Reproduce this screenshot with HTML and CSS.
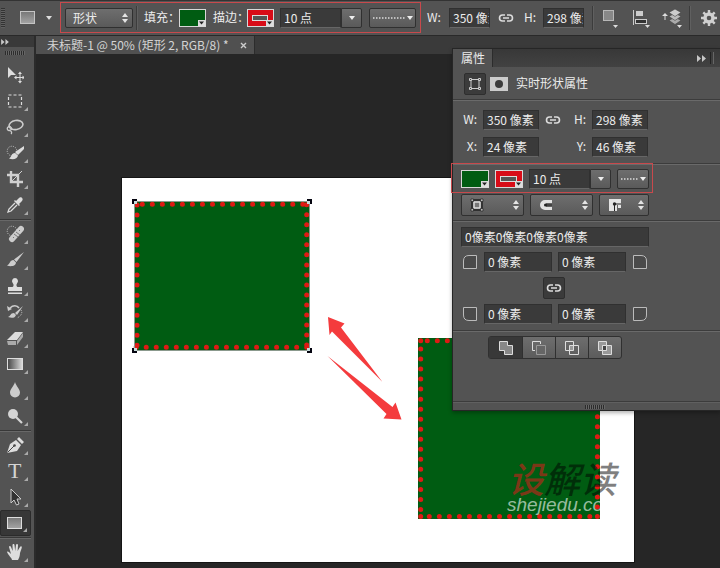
FILE: index.html
```html
<!DOCTYPE html>
<html lang="zh-CN">
<head>
<meta charset="utf-8">
<title>未标题-1</title>
<link rel="stylesheet" href="styles.css">
</head>
<body>
<svg class="defs" aria-hidden="true">
  <defs>
    <linearGradient id="metal" x1="0" y1="0" x2="0" y2="1"><stop offset="0" stop-color="#777"/><stop offset="1" stop-color="#a4a4a4"/></linearGradient>
    <linearGradient id="ramp" x1="0" y1="0" x2="1" y2="0"><stop offset="0" stop-color="#444"/><stop offset="1" stop-color="#ddd"/></linearGradient>
    <symbol id="link" viewBox="0 0 16 10"><path d="M7 2H4.500a3 3 0 0 0 0 6H7M9 2h2.500a3 3 0 0 1 0 6H9M5 5h6" fill="none" stroke="#dcdcdc" stroke-width="1.600"/></symbol>
    <symbol id="swatch-menu" viewBox="0 0 7 6"><path d="M0 0h7v6H0z" fill="#ddd"/><path d="M1 1.500h5L3.500 4.500z" fill="#222"/></symbol>
    <symbol id="updown" viewBox="0 0 6 10"><path d="M3 0l3 4H0zM3 10L0 6h6z" fill="#e4e4e4"/></symbol>
    <symbol id="forward" viewBox="0 0 9 7"><path d="M0 0l4 3.500L0 7zM5 0l4 3.500L5 7z" fill="#c8c8c8"/></symbol>
  </defs>
</svg>
<div class="app">
  <header class="options">
    <span class="grip-v"></span>
    <button class="plain preset" aria-label="矩形工具预设"><svg width="34" height="16"><rect x=".5" y="1.500" width="14" height="12" fill="url(#metal)" stroke="#c4c4c4"/><path d="M26 6h6l-3 4z" fill="#ddd"/></svg></button>
    <span class="pick"><select class="mode" aria-label="工具模式"><option>形状</option></select><svg class="pick-arrow" width="6" height="10"><use href="#updown"/></svg></span>
    <span class="divider"></span>
    <label class="fill-label" for="fill">填充：</label>
    <button id="fill" class="swatch green"><svg class="corner" width="7" height="6"><use href="#swatch-menu"/></svg></button>
    <label class="stroke-label" for="stroke">描边：</label>
    <button id="stroke" class="swatch red"><span class="hollow"></span><svg class="corner" width="7" height="6"><use href="#swatch-menu"/></svg></button>
    <span class="combo"><input aria-label="描边宽度" value="10 点"><button class="raised" aria-label="描边宽度选项"><svg width="6" height="4"><path d="M0 0h6L3 4z" fill="#eee"/></svg></button></span>
    <button class="raised dots" aria-label="描边类型"><svg width="42" height="6"><path d="M1 3h32" stroke="#ddd" stroke-width="1.500" stroke-dasharray="1.500 1.500"/><path d="M35 1h6l-3 4z" fill="#eee"/></svg></button>
    <label class="w-label" for="ow">W:</label><input id="ow" class="size" value="350 像素">
    <button class="plain chain" aria-label="链接宽高"><svg width="16" height="10"><use href="#link"/></svg></button>
    <label class="h-label" for="oh">H:</label><input id="oh" class="size" value="298 像素">
    <span class="divider wide"></span>
    <div class="ops">
      <button class="plain" aria-label="路径操作"><svg width="18" height="20"><rect x="1.500" y="2.500" width="10" height="10" fill="#888" stroke="#b8b8b8"/><path d="M11 17h5l-2.500 3z" fill="#ddd"/></svg></button>
      <button class="plain" aria-label="对齐"><svg width="18" height="20"><path d="M1.500 2v15" stroke="#ccc"/><rect x="4" y="3" width="7" height="5" fill="#ccc"/><rect x="3.500" y="11.500" width="11" height="4" fill="#333" stroke="#ccc"/><path d="M13 17h5l-2.500 3z" fill="#ddd"/></svg></button>
      <button class="plain" aria-label="排列"><svg width="20" height="20"><path d="M13 9l6 3.500-6 4-6-4z" fill="#aaa" stroke="#444" stroke-width=".6"/><path d="M13 5l6 3.500-6 4-6-4z" fill="#bbb" stroke="#444" stroke-width=".6"/><path d="M13 1l6 3.500-6 4-6-4z" fill="#ccc" stroke="#444" stroke-width=".6"/><path d="M3 12V7" stroke="#ddd"/><path d="M0 8l3-3 3 3zM15 17h5l-2.500 3z" fill="#ddd"/></svg></button>
    </div>
    <span class="divider last"></span>
    <button class="plain gear" aria-label="设置"><svg width="16" height="16"><circle cx="8" cy="8" r="4" fill="none" stroke="#d0d0d0" stroke-width="3.400"/><path d="M8 0v3M8 13v3M0 8h3M13 8h3M2.300 2.300l2 2M11.700 11.700l2 2M13.700 2.300l-2 2M4.300 11.700l-2 2" stroke="#d0d0d0" stroke-width="2.400"/></svg></button>
    <span class="mark mark-top"></span>
  </header>

  <div class="body">
    <aside class="toolbar">
      <div class="tool-head"><svg width="8" height="6"><use href="#forward"/></svg></div>
      <div class="tool-grip"><span class="grip-h"></span></div>
      <nav class="tools" aria-label="工具">
        <button aria-label="移动"><svg viewBox="0 0 18 18"><path d="M2 1v11l3-3h5z" fill="#ddd"/><path d="M14 7v9M9.500 11.500h9" stroke="#ddd"/><path d="M14 5.500l2 2.500h-4zM14 17.500l2-2.500h-4zM8 11.500l2.500-2v4zM19 11.500l-2.500-2v4z" fill="#ddd"/></svg></button>
        <button class="more" aria-label="选框"><svg viewBox="0 0 18 18"><rect x="2.500" y="3" width="13" height="12" fill="none" stroke="#ddd" stroke-width="1.200" stroke-dasharray="3 2"/></svg></button>
        <button class="more" aria-label="套索"><svg viewBox="0 0 18 18"><ellipse cx="10" cy="7" rx="7" ry="4.500" fill="none" stroke="#ccc" stroke-width="1.600" transform="rotate(-10 10 7)"/><path d="M5 9.500a2 2 0 1 0-1 3c2-1 2-2 1-3M3 12c3 1 3 3 2 4" fill="none" stroke="#ccc" stroke-width="1.300"/></svg></button>
        <button class="more" aria-label="快速选择"><svg viewBox="0 0 18 18"><circle cx="6" cy="7" r="4.800" fill="none" stroke="#ccc" stroke-dasharray="1 1.300"/><path d="M18 2l-9 6 3 3 6-6zM9 9c-4 0-3 4-6 5.500 4 1.500 8.500.5 9-3z" fill="#ddd"/></svg></button>
        <button class="more" aria-label="裁剪"><svg viewBox="0 0 18 18"><path d="M5 1v11h12M1 5h11v12" fill="none" stroke="#d0d0d0" stroke-width="2.400"/><path d="M16 1L6 11" stroke="#d0d0d0"/></svg></button>
        <button class="more" aria-label="吸管"><svg viewBox="0 0 18 18"><path d="M9 7L3 13l-1 3 3-1 6-6" fill="none" stroke="#ddd" stroke-width="1.300"/><path d="M8 5l5 5 1-1-1-1 3-3c2-2-1-5-3-3l-3 3-1-1z" fill="#ddd"/></svg></button>
        <hr>
        <button class="more" aria-label="修复画笔"><svg viewBox="0 0 18 18"><circle cx="6" cy="6" r="4.800" fill="none" stroke="#ccc" stroke-dasharray="1 1.300"/><path d="M6 14L15 4" stroke="#ccc" stroke-width="6" stroke-linecap="round"/><path d="M8 9l4 3M10 7l4 3M7 12l1 1M13 5l1 1" stroke="#777"/></svg></button>
        <button class="more" aria-label="画笔"><svg viewBox="0 0 18 18"><path d="M18 1L8 8.500l2.500 2.500zM7.500 9c-4 0-3 4-6.500 5.500 4 1.500 9 .5 9-3z" fill="#ccc"/></svg></button>
        <button class="more" aria-label="仿制图章"><svg viewBox="0 0 18 18"><path d="M9 1a3.200 3.200 0 0 0-2 5.500c1 1 .5 3.500-.5 3.500H2v4h14v-4h-4.500c-1 0-1.500-2.500-.5-3.500A3.200 3.200 0 0 0 9 1zM2 15.500h14V17H2z" fill="#ddd"/></svg></button>
        <button class="more" aria-label="历史记录画笔"><svg viewBox="0 0 18 18"><path d="M4 5c3-3 7-3 9 0" fill="none" stroke="#ccc" stroke-width="1.600"/><path d="M1 3l1 5 4-2zM17 3l-8 7 2 2zM8 10c-4 0-3 3-6 4 4 1.500 7 1 8-2z" fill="#ccc"/><path d="M15 7c2 3 0 6-4 8" fill="none" stroke="#bbb" stroke-dasharray="1 1"/></svg></button>
        <button class="more" aria-label="橡皮擦"><svg viewBox="0 0 18 18"><path d="M1 11l8-8h8l-6 8z" fill="#ddd"/><path d="M1 12h9v4H2zM11 12l6-8v4l-6 8z" fill="#aaa"/></svg></button>
        <button class="more" aria-label="渐变"><svg viewBox="0 0 18 18"><rect x="1.500" y="3.500" width="15" height="11" fill="url(#ramp)" stroke="#ddd"/></svg></button>
        <button class="more" aria-label="模糊"><svg viewBox="0 0 18 18"><path d="M9 1c1 4 5 7 5 10.500a5 5 0 0 1-10 0C4 8 8 5 9 1z" fill="#ccc"/></svg></button>
        <button class="more" aria-label="减淡"><svg viewBox="0 0 18 18"><circle cx="7" cy="7" r="5" fill="#d4d4d4"/><path d="M10 10l6 6" stroke="#d4d4d4" stroke-width="2.200"/></svg></button>
        <hr>
        <button class="more" aria-label="钢笔"><svg viewBox="0 0 18 18"><path d="M1 17L4 8l6-4 5 5-4 6zM11 3l2-2 5 5-2 2z" fill="#ddd"/><path d="M1.500 16.500L8 10" stroke="#444"/><circle cx="8.500" cy="9.500" r="1.300" fill="#444"/></svg></button>
        <button class="more type" aria-label="文字">T</button>
        <button class="more" aria-label="路径选择"><svg viewBox="0 0 18 18"><path d="M5 1v14l3-3 2.500 5 2.500-1-2-5h4z" fill="#333" stroke="#ccc"/></svg></button>
        <button class="more active" aria-label="矩形"><svg viewBox="0 0 18 18"><rect x="1.500" y="3.500" width="14" height="11" fill="url(#metal)" stroke="#ddd"/></svg></button>
        <hr>
        <button class="more" aria-label="抓手"><svg viewBox="0 0 18 18"><path d="M6 17c0-2-4-5-5-8 1-1 2 0 4 2L3 4c0-1.500 1.600-1.500 2 0l1.700 4L6.500 2c0-1.500 2-1.500 2 0l.7 6L10 2c.2-1.500 2-1.300 2 .2L11.600 8 14 4c.8-1.300 2.200-.6 1.700 1L14 10c0 3-1 5-2 7z" fill="#ddd"/></svg></button>
      </nav>
    </aside>

    <main class="workspace">
      <div class="tabs"><div class="tab"><span>未标题-1 @ 50% (矩形 2, RGB/8) *</span><button class="plain" aria-label="关闭"><svg width="7" height="7"><path d="M1 1l5 5M6 1L1 6" stroke="#ccc" stroke-width="1.400"/></svg></button></div></div>
      <div class="stage">
        <svg class="document" viewBox="122 178 512 384" width="512" height="384">
          <rect x="122" y="178" width="512" height="384" fill="#fff"/>
          <path d="M135 202h174v148H135zM418 338h182v181H418z" fill="#005c12"/>
          <g fill="none" stroke="#df1a14" stroke-width="5" stroke-linecap="round" stroke-dasharray="0 10.030">
            <path d="M142.300 204.200H304M306.700 204.700V347M306.700 347.300H135M137 345.300V203"/>
            <path d="M427.300 340.700H598M420.700 349V515M429.300 516.500H592M597.400 346.500V508M420.700 340.700h1M420.700 516.500h1M597.400 516.500h1"/>
          </g>
          <path d="M134.500 201.500h175v149h-175z" fill="none" stroke="#8b9a8d"/>
          <path d="M132 199h5v5h-5zM307 199h5v5h-5zM132 348h5v5h-5zM307 348h5v5h-5z" fill="#050510"/>
          <path d="M134 201h3v3h-3zM307 201h3v3h-3zM134 348h3v3h-3zM307 348h3v3h-3z" fill="#c8dcdc"/>
          <path d="M328 317l16.500 6.500-3.500 4 41.500 54.500-50.500-50.500-2.500 3.500zM327.500 356l65 51 3-4.500 6 17-18-1 3-4.500z" fill="#f43b3d"/>
          <text class="brand" x="508" y="493"><tspan fill="#c5231b" fill-opacity=".65">设</tspan><tspan fill="#000" fill-opacity=".5">解读</tspan></text>
          <text class="domain" x="507" y="511">shejiedu.co</text>
        </svg>
      </div>

      <section class="panel">
        <div class="panel-tabs"><span class="panel-tab">属性</span><button class="plain" aria-label="折叠"><svg width="9" height="7"><use href="#forward"/></svg></button><span class="panel-rule"></span></div>
        <div class="section heading">
          <button class="inset" aria-label="形状"><svg width="14" height="14"><path d="M3 2.500h8v9H3z" fill="none" stroke="#ccc"/><path d="M1.500 1.500h2v2h-2zM10.500 1.500h2v2h-2zM1.500 10.500h2v2h-2zM10.500 10.500h2v2h-2z" fill="#444" stroke="#ccc"/></svg></button>
          <button class="plain" aria-label="蒙版"><svg width="18" height="14"><path d="M0 0h18v14H0z" fill="#ccc"/><circle cx="9" cy="7" r="4" fill="#3c3c3c"/></svg></button>
          <h2>实时形状属性</h2>
        </div>
        <div class="section transform">
          <label for="pw">W:</label><input id="pw" value="350 像素">
          <button class="plain" aria-label="链接宽高"><svg width="16" height="10"><use href="#link"/></svg></button>
          <label for="ph">H:</label><input id="ph" value="298 像素">
          <label for="px">X:</label><input id="px" value="24 像素"><span></span>
          <label for="py">Y:</label><input id="py" value="46 像素">
        </div>
        <div class="section paint">
          <div class="row">
            <button class="swatch green" aria-label="填充"><svg class="corner" width="7" height="6"><use href="#swatch-menu"/></svg></button>
            <button class="swatch red" aria-label="描边"><span class="hollow"></span><svg class="corner" width="7" height="6"><use href="#swatch-menu"/></svg></button>
            <span class="combo"><input aria-label="描边宽度" value="10 点"><button class="raised" aria-label="描边宽度选项"><svg width="6" height="4"><path d="M0 0h6L3 4z" fill="#eee"/></svg></button></span>
            <button class="raised dots" aria-label="描边类型"><svg width="26" height="6"><path d="M1 3h18" stroke="#ddd" stroke-width="1.500" stroke-dasharray="1.500 1.500"/><path d="M20 1h6l-3 4z" fill="#eee"/></svg></button>
          </div>
          <div class="row menus">
            <button class="raised" aria-label="描边对齐"><svg width="14" height="14"><rect x="2" y="2" width="10" height="10" fill="none" stroke="#222" stroke-width="1.500"/><rect x="4" y="4" width="6" height="6" fill="#777" stroke="#ddd" stroke-width="1.500"/><path d="M1 1h2.500v2.500H1zM10.500 1H13v2.500h-2.500zM1 10.500h2.500V13H1zM10.500 10.500H13V13h-2.500z" fill="#bbb" stroke="#222" stroke-width=".7"/></svg><svg width="6" height="10"><use href="#updown"/></svg></button>
            <button class="raised" aria-label="描边端点"><svg width="14" height="14"><path d="M13 2H6a5 5 0 0 0 0 10h7V9H7V5h6z" fill="#e2e2e2"/><path d="M6 7h7" stroke="#222"/><circle cx="6.500" cy="7" r="1.500" fill="#222"/></svg><svg width="6" height="10"><use href="#updown"/></svg></button>
            <button class="raised" aria-label="描边角点"><svg width="14" height="14"><path d="M1 1h12v9h-3v-3H9v6H1z" fill="#e2e2e2"/><path d="M13 6H6.500v7" fill="none" stroke="#222"/><circle cx="6.500" cy="6" r="1.700" fill="#222"/></svg><svg width="6" height="10"><use href="#updown"/></svg></button>
          </div>
          <span class="mark mark-panel"></span>
        </div>
        <div class="section radii">
          <input class="all" aria-label="全部圆角" value="0像素0像素0像素0像素">
          <div class="pair">
            <svg width="16" height="16"><path d="M1.500 14.500V7Q1.500 1.500 7 1.500h7.500v13z" fill="#4a4a4a" stroke="#bbb"/></svg>
            <input aria-label="左上圆角" value="0 像素"><input aria-label="右上圆角" value="0 像素">
            <svg width="16" height="16"><path d="M1.500 1.500H9Q14.500 1.500 14.500 7v7.500h-13z" fill="#4a4a4a" stroke="#bbb"/></svg>
          </div>
          <button class="inset" aria-label="链接圆角"><svg width="16" height="10"><use href="#link"/></svg></button>
          <div class="pair">
            <svg width="16" height="16"><path d="M1.500 1.500h13v13H7Q1.500 14.500 1.500 9z" fill="#4a4a4a" stroke="#bbb"/></svg>
            <input aria-label="左下圆角" value="0 像素"><input aria-label="右下圆角" value="0 像素">
            <svg width="16" height="16"><path d="M1.500 1.500h13V9Q14.500 14.500 9 14.500H1.500z" fill="#4a4a4a" stroke="#bbb"/></svg>
          </div>
        </div>
        <div class="section combine">
          <div class="segments">
            <button class="active" aria-label="合并"><svg width="14" height="14"><path d="M.5.500h8v4h5v9h-8v-4h-5z" fill="#888" stroke="#ddd"/></svg></button>
            <button aria-label="减去"><svg width="14" height="14"><path d="M4.500 4.500h9v9h-9z" fill="#666" stroke="#999"/><path d="M8.500 3V.500h-8v9H3" fill="none" stroke="#ddd"/></svg></button>
            <button aria-label="相交"><svg width="14" height="14"><path d="M4.500 4.500h4v5h-4z" fill="#999"/><path d="M.5.500h8v9h-8zM4.500 4.500h9v9h-9z" fill="none" stroke="#ddd"/></svg></button>
            <button aria-label="排除"><svg width="14" height="14"><path d="M.5.500h8v9h-8zM4.500 4.500h9v9h-9z" fill="#999" stroke="#ddd"/><path d="M4.500 4.500h4v5h-4z" fill="#444" stroke="#ddd"/></svg></button>
          </div>
        </div>
        <div class="panel-foot"><span class="grip-h"></span></div>
      </section>
    </main>
  </div>
</div>
</body>
</html>
```
FILE: styles.css
```css
* { box-sizing: border-box; }
body {
  margin: 0;
  font: 12px/16px "Noto Sans CJK SC", sans-serif;
  color: #ececec;
  background: #262626;
}
button, input, select { font: inherit; color: inherit; margin: 0; padding: 0; border: 0; border-radius: 0; }
button { background: none; }
svg { display: block; flex: none; }
.defs { position: absolute; width: 0; height: 0; }
.app { display: flex; flex-direction: column; height: 100vh; overflow: hidden; }

input {
  min-width: 0;
  height: 20px;
  padding: 0 0 2px 3px;
  background: #3a3a3a;
  border: 1px solid #303030;
  border-bottom-color: #666;
}
.plain { display: flex; align-items: center; justify-content: center; flex: none; }
.raised {
  display: flex;
  align-items: center;
  justify-content: center;
  height: 20px;
  background: linear-gradient(#6e6e6e, #5a5a5a);
  border: 1px solid #303030;
  border-radius: 2px;
}
.inset {
  display: flex;
  align-items: center;
  justify-content: center;
  width: 22px;
  height: 22px;
  background: #3b3b3b;
  border: 1px solid #2e2e2e;
  border-radius: 2px;
}
.swatch { position: relative; flex: none; width: 27px; height: 18px; border: 1px solid #d8d8d8; }
.green { background: #005c12; }
.red { background: #d80c18; }
.hollow { position: absolute; inset: 5px 5px 5px 4px; background: #555; border: 1px solid #ddd; }
.corner { position: absolute; right: 0; bottom: 0; }
.combo { display: flex; flex: none; width: 82px; }
.combo input { flex: 1; }
.combo .raised { width: 21px; border-radius: 0 2px 2px 0; }
.mark { position: absolute; border: 1px solid #c8494c; pointer-events: none; }
.grip-h { width: 20px; height: 4px; background: repeating-linear-gradient(90deg, #2c2c2c 0 1px, #666 1px 2px); }
.grip-v { width: 4px; height: 20px; background: repeating-linear-gradient(#333 0 1px, #606060 1px 2px); }

/* options bar */
.options {
  position: relative;
  display: flex;
  align-items: center;
  flex: none;
  height: 36px;
  padding-left: 1px;
  background: #535353;
  border-top: 1px solid #333;
  border-bottom: 1px solid #292929;
  white-space: nowrap;
}
.options > * { flex: none; }
.options label { padding-bottom: 2px; }
.preset { margin-left: 15px; }
.pick { position: relative; width: 68px; margin-left: 11px; }
.mode {
  appearance: none;
  display: block;
  width: 100%;
  height: 20px;
  padding: 0 0 1px 7px;
  background: linear-gradient(#6e6e6e, #5a5a5a);
  border: 1px solid #303030;
  border-radius: 2px;
}
.pick-arrow { position: absolute; right: 5px; top: 5px; }
.divider { width: 2px; height: 24px; margin-left: 3px; background: #3c3c3c; border-right: 1px solid #606060; }
.divider.wide { margin-left: 8px; }
.divider.last { margin-left: 7px; }
.fill-label { width: 35px; margin-left: 6px; }
.stroke-label { width: 34px; margin-left: 7px; }
.options .combo { margin-left: 6px; }
.options .dots { width: 47px; margin-left: 7px; }
.w-label { width: 22px; margin-left: 11px; }
.h-label { width: 19px; margin-left: 10px; }
.size { width: 41px; }
.chain { margin-left: 8px; }
.ops { display: flex; gap: 12px; margin-left: 8px; }
.gear { margin-left: 10px; }
.mark-top { left: 60px; top: 1px; width: 361px; height: 31px; }

/* toolbar */
.body { display: grid; grid-template-columns: 36px minmax(0, 1fr); flex: 1; min-height: 0; }
.toolbar { background: #535353; border-right: 2px solid #2b2b2b; overflow: hidden; }
.tool-head { height: 11px; padding: 3px 0 0 1px; background: #393939; }
.tool-grip { display: flex; justify-content: center; height: 15px; padding: 4px 4px 0 0; }
.tools { display: flex; flex-direction: column; }
.tools button {
  position: relative;
  display: flex;
  align-items: center;
  width: 31px;
  height: 26px;
  padding-left: 6px;
  flex: none;
}
.tools svg { width: 18px; height: 18px; }
.tools hr { width: 31px; height: 3px; margin: 0; border: 0; border-bottom: 1px solid #686868; border-top: 1px solid #535353; background: #383838; flex: none; }
.tools .more::after {
  content: "";
  position: absolute;
  right: 3px;
  bottom: 3px;
  border: solid transparent;
  border-width: 0 0 4px 4px;
  border-bottom-color: #aaa;
}
.tools .active { background: #373737; border: 1px solid #2b2b2b; border-radius: 2px; padding-left: 5px; }
.tools .type { padding-left: 8px; font: 22px/26px "Liberation Serif", serif; color: #d4d4d4; }

/* workspace */
.workspace { position: relative; display: flex; flex-direction: column; min-width: 0; }
.tabs { display: flex; flex: none; height: 19px; background: #3a3a3a; border-bottom: 1px solid #262626; }
.tab { display: flex; align-items: center; gap: 11px; padding: 0 7px 0 11px; background: #505050; border-right: 1px solid #2c2c2c; color: #d4d4d4; white-space: nowrap; }
.stage { position: relative; flex: 1; overflow: hidden; background: #262626; }
.document { position: absolute; left: 86px; top: 123px; box-shadow: 0 0 0 1px #151515; }
.brand { font: italic 500 36px "Noto Sans CJK SC", sans-serif; }
.domain { font: italic 19px "Liberation Sans", sans-serif; fill: #fff; fill-opacity: .6; }

/* properties panel */
.panel {
  position: absolute;
  left: 416px;
  right: 0;
  top: 12px;
  background: #535353;
  border: 1px solid #262626;
  border-right: 0;
  box-shadow: 0 2px 4px rgba(0, 0, 0, .3);
}
.panel-tabs { display: flex; align-items: center; height: 18px; padding-right: 1px; background: linear-gradient(#383838, #424242); }
.panel-tab { margin-right: auto; padding: 1px 7px 1px 8px; background: #535353; border-right: 1px solid #2c2c2c; }
.panel-rule { width: 4px; height: 12px; margin: 0 5px 0 4px; border-left: 1px solid #222; border-right: 1px solid #666; }
.section { border-bottom: 1px solid #6a6a6a; box-shadow: inset 0 -1px #3c3c3c; padding-left: 8px; }
.heading { display: flex; align-items: center; gap: 4px; height: 34px; padding-left: 11px; }
.heading h2 { margin: 0 0 0 4px; padding-bottom: 2px; font: inherit; }
.transform {
  display: grid;
  grid-template-columns: 16px 56px 16px 19px 56px;
  column-gap: 6px;
  row-gap: 7px;
  align-items: center;
  padding-top: 9px;
  padding-bottom: 7px;
}
.transform label { padding-bottom: 2px; text-align: right; }
.paint { position: relative; padding-top: 3px; padding-bottom: 3px; }
.row { display: flex; align-items: center; gap: 6px; height: 22px; }
.row .swatch { width: 28px; }
.row .dots { width: 32px; }
.menus { height: 26px; margin-top: 2px; }
.menus .raised { width: 63px; height: 22px; justify-content: space-between; padding: 0 4px 0 8px; }
.menus .raised:last-child { width: 50px; }
.mark-panel { left: -2px; top: -2px; width: 202px; height: 30px; }
.radii { display: flex; flex-direction: column; gap: 5px; padding-top: 5px; padding-bottom: 7px; align-items: flex-start; }
.all { width: 188px; }
.pair { display: flex; align-items: center; gap: 6px; width: 188px; height: 20px; padding: 0 1px; }
.pair input { flex: 1; }
.radii .inset { margin-left: 82px; }
.combine { padding: 4px 0 43px 35px; border-bottom-color: #606060; }
.segments { display: inline-flex; vertical-align: top; border: 1px solid #303030; border-radius: 3px; background: linear-gradient(#6e6e6e, #5c5c5c); }
.segments button { display: flex; align-items: center; justify-content: center; width: 33px; height: 21px; }
.segments button + button { border-left: 1px solid #303030; }
.segments .active { background: #383838; }
.panel-foot { display: flex; align-items: center; justify-content: center; height: 7px; padding-left: 16px; }
```
